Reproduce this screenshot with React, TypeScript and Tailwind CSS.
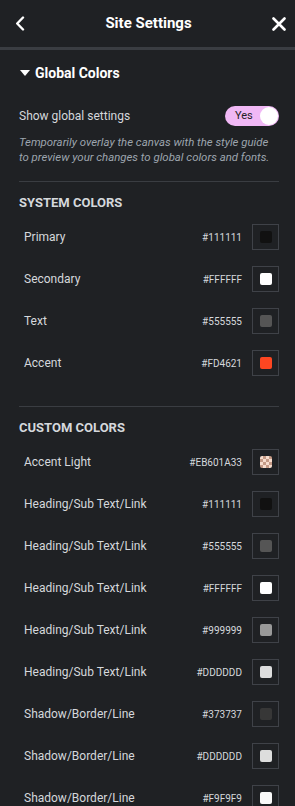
type ColorItem = { name: string; hex: string; swatch?: string; checker?: boolean };

const systemColors: ColorItem[] = [
	{ name: 'Primary', hex: '#111111', swatch: 'bg-[#111111]' },
	{ name: 'Secondary', hex: '#FFFFFF', swatch: 'bg-[#ffffff]' },
	{ name: 'Text', hex: '#555555', swatch: 'bg-[#555555]' },
	{ name: 'Accent', hex: '#FD4621', swatch: 'bg-[#fd4621]' }
];

const customColors: ColorItem[] = [
	{ name: 'Accent Light', hex: '#EB601A33', checker: true },
	{ name: 'Heading/Sub Text/Link', hex: '#111111', swatch: 'bg-[#111111]' },
	{ name: 'Heading/Sub Text/Link', hex: '#555555', swatch: 'bg-[#555555]' },
	{ name: 'Heading/Sub Text/Link', hex: '#FFFFFF', swatch: 'bg-[#ffffff]' },
	{ name: 'Heading/Sub Text/Link', hex: '#999999', swatch: 'bg-[#999999]' },
	{ name: 'Heading/Sub Text/Link', hex: '#DDDDDD', swatch: 'bg-[#dddddd]' },
	{ name: 'Shadow/Border/Line', hex: '#373737', swatch: 'bg-[#373737]' },
	{ name: 'Shadow/Border/Line', hex: '#DDDDDD', swatch: 'bg-[#dddddd]' },
	{ name: 'Shadow/Border/Line', hex: '#F9F9F9', swatch: 'bg-[#f9f9f9]' }
];

const Checker = () => (
	<div className="grid h-[12px] w-[12px] grid-cols-4 overflow-hidden rounded-[2px]">
		{Array.from({ length: 16 }).map((_, i) => {
			const dark = (Math.floor(i / 4) + i) % 2 === 1;
			return (
				<div key={i} className={dark ? 'bg-[#c59a86]' : 'bg-[#f6dccd]'} />
			);
		})}
	</div>
);

const ColorRow = ({ item }: { item: ColorItem }) => (
	<div className="flex h-[42px] items-center justify-between pl-[5px]">
		<span className="text-[12px] text-[#d5d8dc]">{item.name}</span>
		<div className="flex items-center gap-[10px]">
			<span className="text-[10px] text-[#d5d8dc]">{item.hex}</span>
			<div className="flex h-[26px] w-[27px] items-center justify-center border border-[#3f4248]">
				{item.checker ? (
					<Checker />
				) : (
					<div className={`h-[12px] w-[12px] rounded-[2px] ${item.swatch}`} />
				)}
			</div>
		</div>
	</div>
);

export default function App() {
	return (
		<div className="min-h-[806px] w-[295px] overflow-hidden bg-[#1f2124] font-['Roboto',sans-serif] text-[#d5d8dc]">
			<header className="flex h-[47px] items-center justify-between pl-[15px] pr-[9px]">
				<svg width="10" height="15" viewBox="0 0 10 15" fill="none">
					<path d="M8 1.5 L2.2 7.5 L8 13.5" stroke="#ffffff" strokeWidth="2.4" strokeLinecap="round" strokeLinejoin="round" />
				</svg>
				<h1 className="text-[15px] font-bold text-white">Site Settings</h1>
				<svg width="14" height="14" viewBox="0 0 14 14" fill="none">
					<path d="M1.5 1.5 L12.5 12.5 M12.5 1.5 L1.5 12.5" stroke="#ffffff" strokeWidth="2.6" strokeLinecap="round" />
				</svg>
			</header>
			<div className="h-[3px] bg-[#3a3d42]" />

			<div className="pl-[19px] pr-[16px]">
				<div className="mt-[13px] flex h-[20px] items-center gap-[5px]">
					<svg width="10" height="6" viewBox="0 0 10 6" className="ml-[1px]">
						<path d="M0 0 L10 0 L5 6 Z" fill="#ffffff" />
					</svg>
					<span className="text-[14px] font-bold text-white">Global Colors</span>
				</div>

				<div className="mt-[23px] flex h-[20px] items-center justify-between">
					<span className="text-[12px] text-[#d5d8dc]">Show global settings</span>
					<div className="flex h-[20px] w-[54px] items-center justify-between rounded-full bg-[#f0b8f5] pl-[10px] pr-[1px]">
						<span className="text-[11px] text-[#1f2124]">Yes</span>
						<div className="h-[18px] w-[18px] rounded-full bg-white" />
					</div>
				</div>

				<p className="mt-[9px] text-[11.4px] leading-[15px] italic text-[#9da5ae]">
					Temporarily overlay the canvas with the style guide to preview your changes to global colors and fonts.
				</p>

				<div className="mt-[16px] h-px bg-[#3a3d42]" />

				<h2 className="mt-[13px] h-[16px] text-[13px] leading-[16px] font-bold uppercase text-[#d5d8dc]">
					System Colors
				</h2>
				<div className="mt-[5px]">
					{systemColors.map((c, i) => (
						<ColorRow key={i} item={c} />
					))}
				</div>

				<div className="mt-[22px] h-px bg-[#3a3d42]" />

				<h2 className="mt-[13px] h-[16px] text-[13px] leading-[16px] font-bold uppercase text-[#d5d8dc]">
					Custom Colors
				</h2>
				<div className="mt-[5px]">
					{customColors.map((c, i) => (
						<ColorRow key={i} item={c} />
					))}
				</div>
			</div>
		</div>
	);
}
